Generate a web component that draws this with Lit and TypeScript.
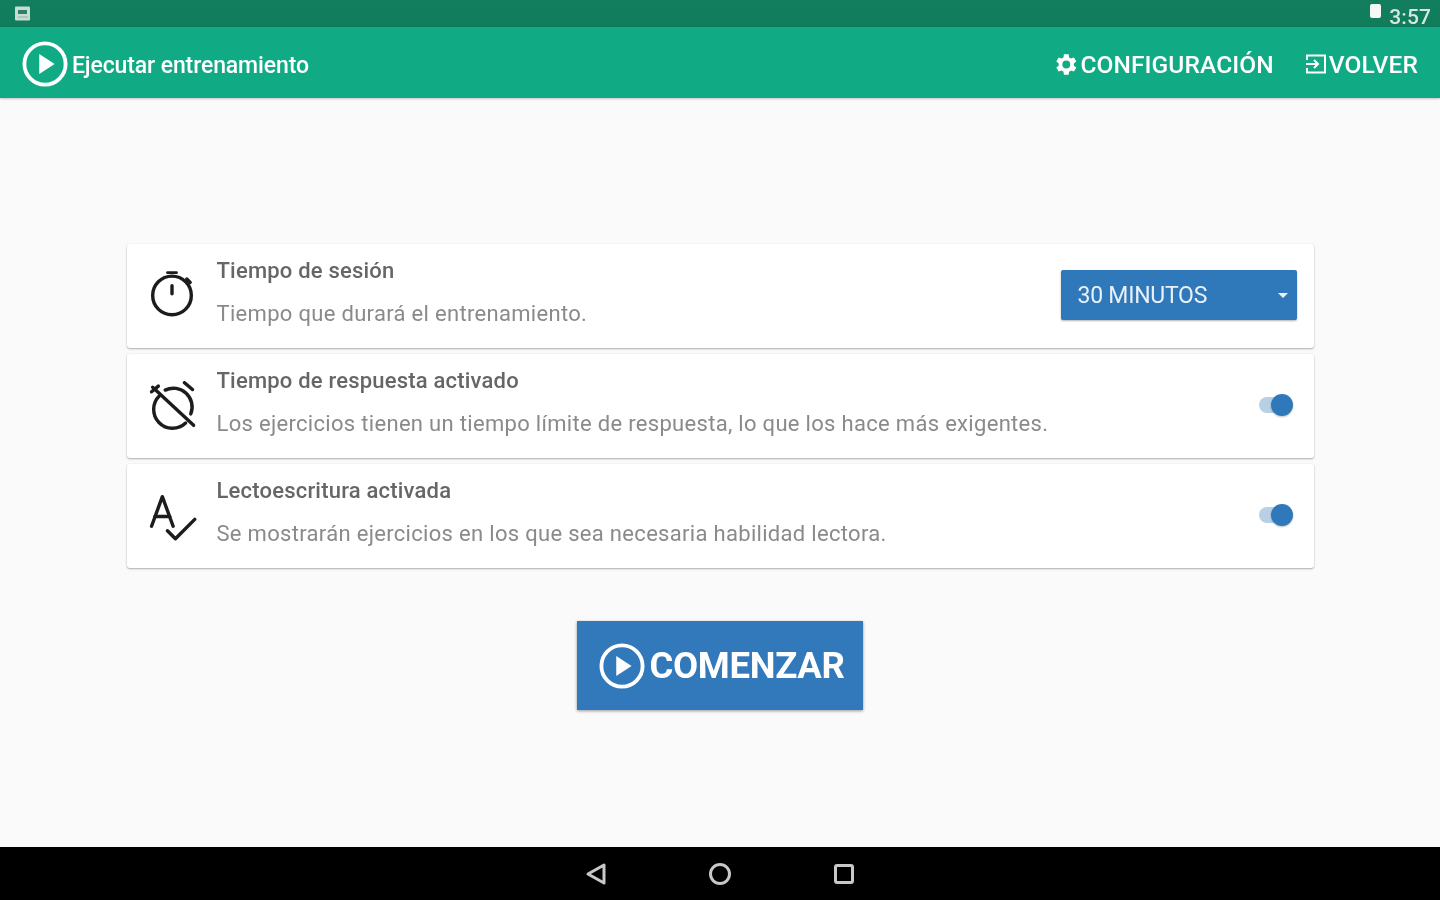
import { LitElement, css, html, svg } from 'lit'
import { customElement } from 'lit/decorators.js'

const playIcon = (size: number) => html`
  <svg width=${size} height=${size} viewBox="0 0 48 48" fill="none">
    <circle cx="24" cy="24" r="21.5" stroke="currentColor" stroke-width="4"></circle>
    <path d="M18 13.5 34 24 18 34.5Z" fill="currentColor"></path>
  </svg>
`

const rows = [
  {
    icon: svg`
      <path d="M18 1.500h8" stroke-width="2.400"/>
      <circle cx="22" cy="21.500" r="17"/>
      <path d="M22 13v7" stroke-width="3"/>
      <path d="M35 7l3 3"/>
    `,
    title: 'Tiempo de sesión',
    desc: 'Tiempo que durará el entrenamiento.',
  },
  {
    icon: svg`
      <path d="M5 5.500 41 39" />
      <path d="M11 13a16.500 16.500 0 0 0 23 24" />
      <path d="M16 8a16.500 16.500 0 0 1 22.500 21" />
      <path d="M4 9.500l6-5" />
      <path d="M33 1.500l7 6" />
    `,
    title: 'Tiempo de respuesta activado',
    desc: 'Los ejercicios tienen un tiempo límite de respuesta, lo que los hace más exigentes.',
  },
  {
    icon: svg`
      <path d="M4 31 13.500 5 23 31" />
      <path d="M7 22.500h13" />
      <path d="M18 35l7 7L42 25" />
    `,
    title: 'Lectoescritura activada',
    desc: 'Se mostrarán ejercicios en los que sea necesaria habilidad lectora.',
  },
]

@customElement('app-root')
export class AppRoot extends LitElement {
  static styles = css`
    :host {
      display: flex;
      flex-direction: column;
      width: 1440px;
      height: 900px;
      overflow: hidden;
      background: #fafafa;
      font-family: Roboto, 'Liberation Sans', sans-serif;
      filter: blur(0.6px);
    }

    .status {
      height: 27px;
      flex: none;
      background: linear-gradient(#127e5e, #0f7c5c);
      display: flex;
      align-items: center;
      justify-content: space-between;
      padding: 0 9px 0 15px;
      color: #e4efe9;
    }
    .status-right { display: flex; align-items: center; gap: 8px; }
    .clock { font-size: 21px; font-weight: 500; margin-top: 7px; color: #d5e7df; letter-spacing: 0.1px; }
    .notif { display: block; }
    .battery { width: 11px; height: 14px; background: #f4f8f6; border-radius: 2px; margin-top: -6px; }

    .bar {
      height: 71px;
      flex: none;
      background: #10ab84;
      color: #fff;
      display: flex;
      align-items: center;
      padding: 3px 22px 0 22px;
      box-sizing: border-box;
      box-shadow: 0 1px 2px rgba(0, 0, 0, 0.22);
      position: relative;
    }
    .bar-title {
      display: flex;
      align-items: center;
      gap: 4px;
      font-size: 23px;
      font-weight: 500;
      letter-spacing: -0.12px;
    }
    .bar-label { margin-top: 2px; }
    .bar-actions { margin-left: auto; display: flex; align-items: center; gap: 30px; }
    .action { display: flex; align-items: center; gap: 1px; font-size: 24.500px; font-weight: 500; letter-spacing: 0.1px; }

    main {
      flex: 1;
      display: flex;
      flex-direction: column;
      align-items: center;
      padding-top: 146px;
    }
    .rows { display: flex; flex-direction: column; gap: 6px; width: 1187px; }
    .row {
      height: 104px;
      box-sizing: border-box;
      background: #fff;
      border-radius: 3px;
      box-shadow: 0 1px 2px rgba(0, 0, 0, 0.3), 0 0 2px rgba(0, 0, 0, 0.06);
      display: flex;
      align-items: center;
      padding: 0 17px 0 20px;
    }
    .row-icon {
      width: 50px;
      height: 50px;
      flex: none;
      margin-right: 20px;
      fill: none;
      stroke: #1c1c1c;
      stroke-width: 3;
      stroke-linecap: round;
      stroke-linejoin: round;
    }
    .row-text { flex: 1; display: flex; flex-direction: column; gap: 17px; margin-top: -8px; }
    .row-title { font-size: 22px; line-height: 26px; font-weight: 500; color: #666; letter-spacing: 0.2px; }
    .row-desc { font-size: 22px; line-height: 26px; color: #8a8a8a; letter-spacing: 0.31px; }

    .select {
      width: 236px;
      height: 50px;
      flex: none;
      margin-top: -2px;
      background: #2f78ba;
      color: #e9f1f8;
      border-radius: 2px;
      box-shadow: 0 1px 2px rgba(0, 0, 0, 0.3);
      display: flex;
      align-items: center;
      justify-content: space-between;
      padding: 0 9px 0 17px;
      box-sizing: border-box;
      font-size: 23px;
      letter-spacing: -0.25px;
    }
    .caret {
      width: 0;
      height: 0;
      border-left: 5px solid transparent;
      border-right: 5px solid transparent;
      border-top: 5px solid #e9f1f8;
    }

    .toggle { position: relative; width: 34px; height: 22px; flex: none; margin: -2px 4px 0 0; }
    .track {
      position: absolute;
      left: 0;
      top: 3px;
      width: 30px;
      height: 16px;
      border-radius: 8px;
      background: #b7d0e6;
    }
    .thumb {
      position: absolute;
      right: 0;
      top: 0;
      width: 22px;
      height: 22px;
      border-radius: 50%;
      background: #2f78ba;
      box-shadow: 0 1px 2px rgba(0, 0, 0, 0.25);
    }

    .start {
      margin-top: 53px;
      width: 286px;
      height: 89px;
      box-sizing: border-box;
      padding-left: 4px;
      background: #3179ba;
      color: #fff;
      box-shadow: 0 1px 3px rgba(0, 0, 0, 0.4);
      display: flex;
      align-items: center;
      justify-content: center;
      gap: 4px;
      font-size: 36.500px;
      font-weight: 700;
      letter-spacing: -0.3px;
    }

    .nav {
      height: 53px;
      flex: none;
      background: #000;
      color: #c8c8c8;
      display: flex;
      align-items: center;
      justify-content: center;
      gap: 100px;
    }
    .nav svg { fill: none; stroke: currentColor; stroke-width: 3; stroke-linejoin: round; }
  `

  render() {
    return html`
      <div class="status">
        <svg class="notif" width="16" height="15" viewBox="0 0 16 15">
          <rect width="15" height="14" y="0.5" rx="1" fill="#c9dcd3"></rect>
          <path d="M3 4h9v4H3z" fill="#2f7f67"></path>
          <path d="M3 10h10v2H3z" fill="#a9c7ba"></path>
        </svg>
        <div class="status-right">
          <span class="battery"></span>
          <span class="clock">3:57</span>
        </div>
      </div>

      <header class="bar">
        <div class="bar-title">${playIcon(46)}<span class="bar-label">Ejecutar entrenamiento</span></div>
        <div class="bar-actions">
          <div class="action">
            <svg width="27" height="27" viewBox="0 0 24 24" fill="#fff">
              <path
                fill-rule="evenodd"
                d="M19.400 13a7.500 7.500 0 0 0 0-2l2.200-1.700-2.100-3.600-2.600 1a7.500 7.500 0 0 0-1.700-1L14.800 2.900h-4.200L10.200 5.700a7.500 7.500 0 0 0-1.700 1l-2.600-1-2.100 3.600L6 11a7.500 7.500 0 0 0 0 2l-2.200 1.700 2.100 3.600 2.600-1a7.500 7.500 0 0 0 1.700 1l.4 2.800h4.200l.4-2.800a7.500 7.500 0 0 0 1.700-1l2.600 1 2.100-3.600ZM12.700 15.500a3.500 3.500 0 1 1 0-7 3.500 3.500 0 0 1 0 7Z"
              ></path>
            </svg>
            CONFIGURACIÓN
          </div>
          <div class="action">
            <svg width="24" height="24" viewBox="0 0 24 24" fill="none" stroke="#fff" stroke-width="2">
              <path d="M3 8V3.500h18v17H3V16"></path>
              <path d="M2 12h12M10 8l4 4-4 4"></path>
            </svg>
            VOLVER
          </div>
        </div>
      </header>

      <main>
        <div class="rows">
          ${rows.map(
            (r, i) => html`
              <div class="row">
                <svg class="row-icon" viewBox="0 0 44 44">${r.icon}</svg>
                <div class="row-text">
                  <div class="row-title">${r.title}</div>
                  <div class="row-desc">${r.desc}</div>
                </div>
                ${i === 0
                  ? html`<div class="select">30 MINUTOS<span class="caret"></span></div>`
                  : html`<div class="toggle"><span class="track"></span><span class="thumb"></span></div>`}
              </div>
            `,
          )}
        </div>
        <div class="start">${playIcon(46)}COMENZAR</div>
      </main>

      <footer class="nav">
        <svg width="24" height="24" viewBox="0 0 24 24"><path d="M20 3v18L4 12Z"></path></svg>
        <svg width="24" height="24" viewBox="0 0 24 24"><circle cx="12" cy="12" r="9.500"></circle></svg>
        <svg width="24" height="24" viewBox="0 0 24 24"><rect x="3.500" y="3.500" width="17" height="17" rx="1.500"></rect></svg>
      </footer>
    `
  }
}
